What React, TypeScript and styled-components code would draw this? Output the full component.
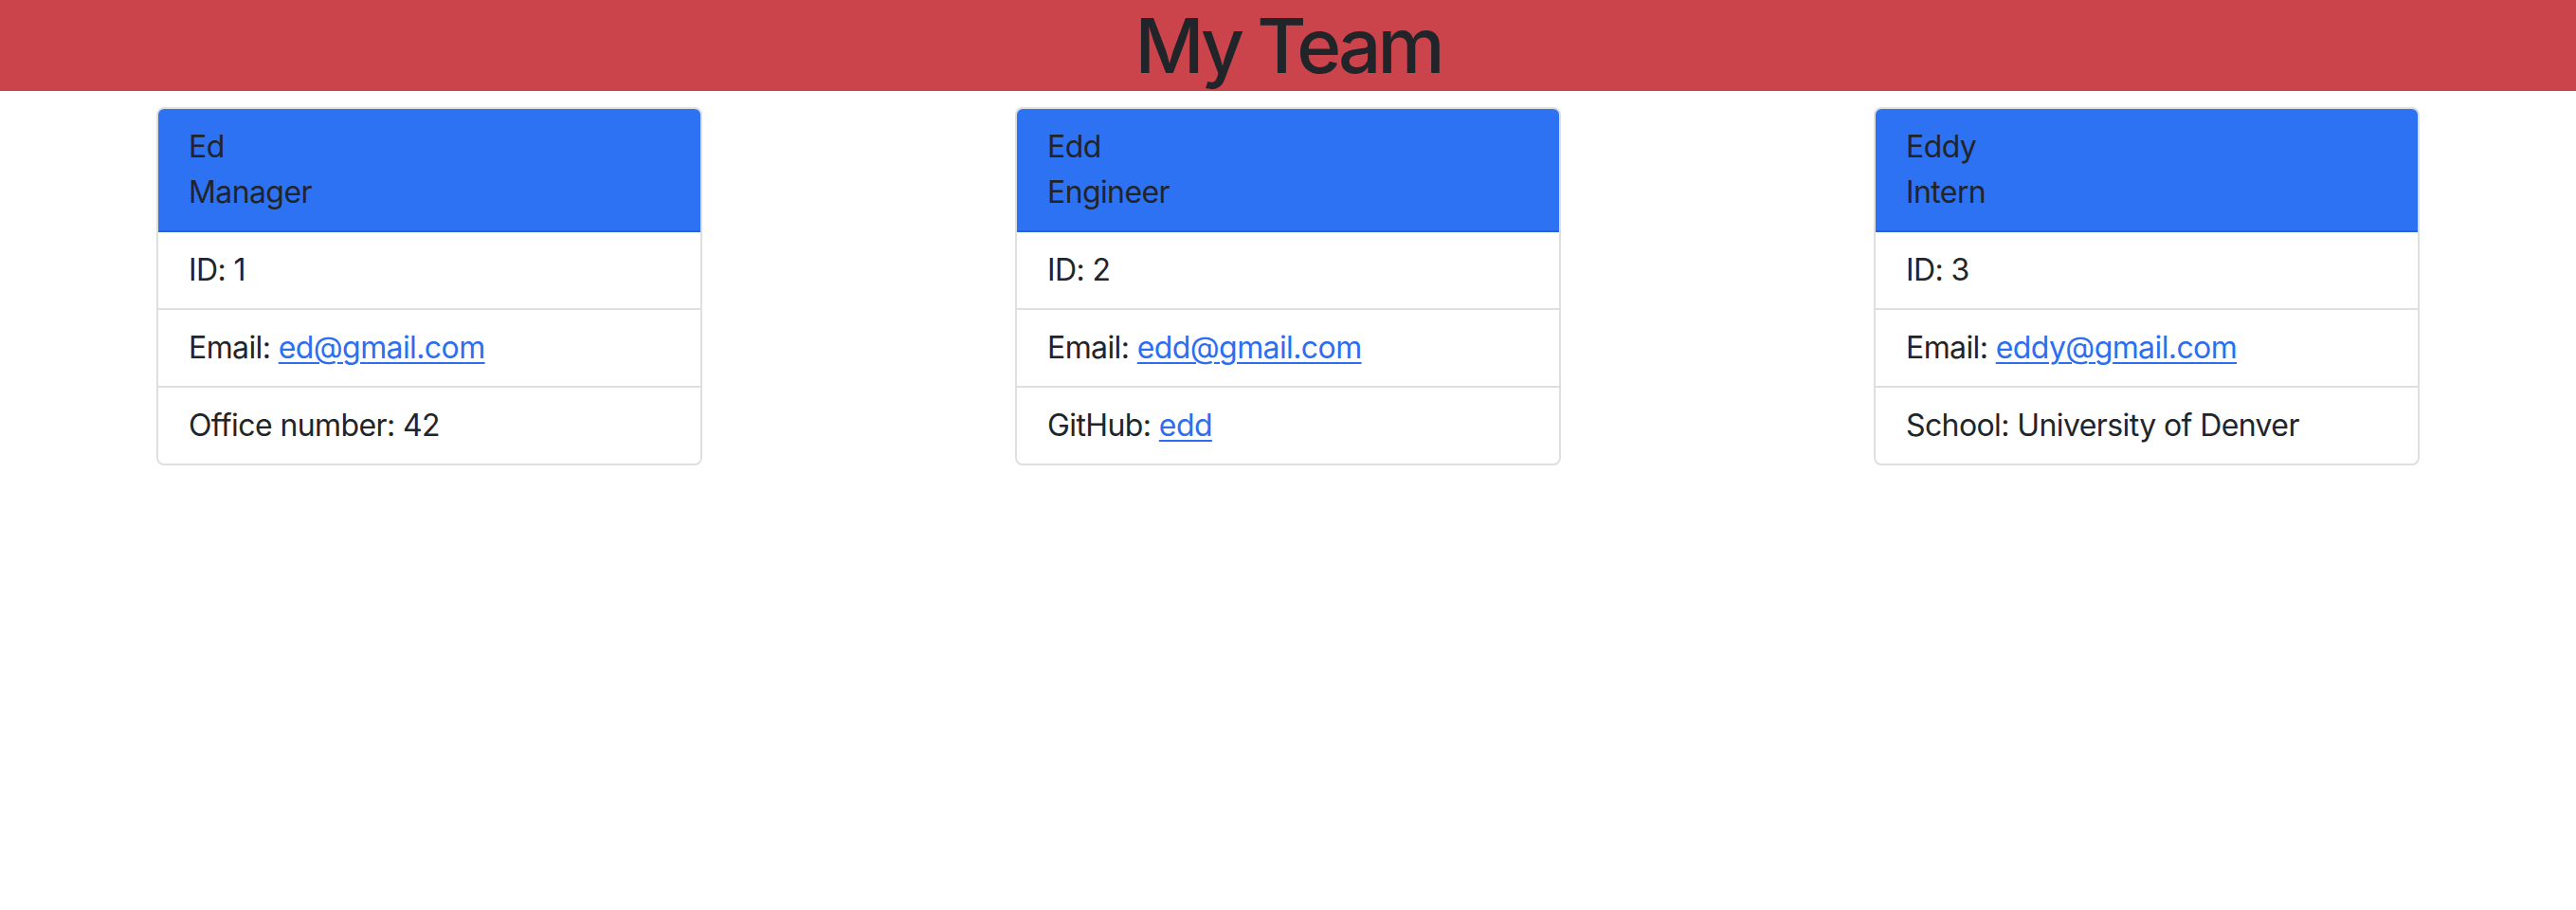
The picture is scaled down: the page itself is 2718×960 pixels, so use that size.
import React from "react";
import styled, { createGlobalStyle } from "styled-components";

const GlobalStyle = createGlobalStyle`
  * { box-sizing: border-box; }
  html, body { margin: 0; padding: 0; background: #ffffff; }
  body {
    font-family: Inter, "Noto Sans", "Liberation Sans", sans-serif;
    font-size: 32px;
    line-height: 1.5;
    letter-spacing: -0.6px;
    color: #212529;
  }
`;

const Banner = styled.header`
  background: #cc444b;
  height: 96px;
  display: flex;
  align-items: center;
  justify-content: center;
`;

const Title = styled.h1`
  margin: 0;
  font-size: 80px;
  font-weight: 500;
  line-height: 1.2;
  letter-spacing: -4px;
  color: #212529;
`;

const Row = styled.main`
  display: grid;
  grid-template-columns: repeat(3, 1fr);
  padding-top: 17px;
`;

const Column = styled.div`
  display: flex;
  justify-content: center;
`;

const Card = styled.section`
  width: 576px;
  border: 2px solid #dfdfdf;
  border-radius: 8px;
  overflow: hidden;
  background: #fff;
`;

const CardHeader = styled.div`
  background: #2d72f3;
  padding: 16px 32px;
  border-bottom: 2px solid #2862d4;
`;

const HeaderLine = styled.div`
  line-height: 48px;
`;

const List = styled.ul`
  list-style: none;
  margin: 0;
  padding: 0;
`;

const Item = styled.li`
  padding: 16px 32px;
  line-height: 48px;
  & + & {
    border-top: 2px solid #dfdfdf;
  }
`;

const Link = styled.a`
  color: #2d6ef0;
  text-decoration: underline;
  text-underline-offset: 4px;
  text-decoration-thickness: 2px;
`;

type Member = {
  name: string;
  role: string;
  id: number;
  email: string;
  extraLabel: string;
  extraValue: string;
  extraLink?: string;
};

const team: Member[] = [
  { name: "Ed", role: "Manager", id: 1, email: "ed@gmail.com", extraLabel: "Office number", extraValue: "42" },
  { name: "Edd", role: "Engineer", id: 2, email: "edd@gmail.com", extraLabel: "GitHub", extraValue: "edd", extraLink: "https://github.com/edd" },
  { name: "Eddy", role: "Intern", id: 3, email: "eddy@gmail.com", extraLabel: "School", extraValue: "University of Denver" },
];

export default function App() {
  return (
    <>
      <GlobalStyle />
      <Banner>
        <Title>My Team</Title>
      </Banner>
      <Row>
        {team.map((m) => (
          <Column key={m.id}>
            <Card>
              <CardHeader>
                <HeaderLine>{m.name}</HeaderLine>
                <HeaderLine>{m.role}</HeaderLine>
              </CardHeader>
              <List>
                <Item>ID: {m.id}</Item>
                <Item>
                  Email: <Link href={`mailto:${m.email}`}>{m.email}</Link>
                </Item>
                <Item>
                  {m.extraLabel}:{" "}
                  {m.extraLink ? <Link href={m.extraLink}>{m.extraValue}</Link> : m.extraValue}
                </Item>
              </List>
            </Card>
          </Column>
        ))}
      </Row>
    </>
  );
}
